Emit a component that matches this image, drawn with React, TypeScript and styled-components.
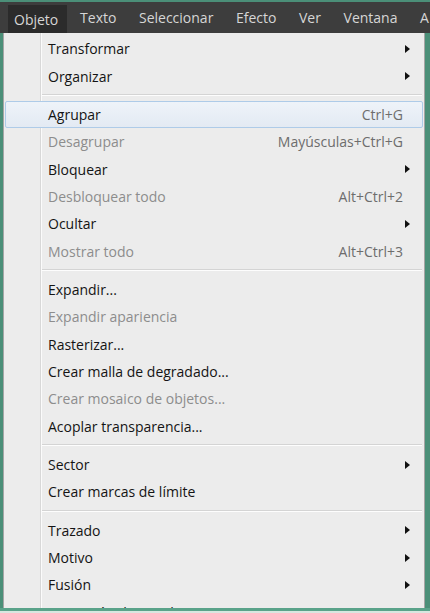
import React from "react";
import styled, { createGlobalStyle } from "styled-components";

const Global = createGlobalStyle`
  html, body { margin: 0; padding: 0; background: #4b8f78; }
  body { font-family: "Open Sans", "Noto Sans", sans-serif; }
`;

const Screen = styled.div`
  width: 430px;
  height: 613px;
  overflow: hidden;
  display: flex;
  flex-direction: column;
  background: #4b8f78;
`;

const Viewport = styled.div`
  height: 606px;
  margin-top: 2px;
  overflow: hidden;
  display: flex;
  flex-direction: column;
`;

const BottomEdge = styled.div`
  height: 3px;
  background: #5aa38a;
  border-bottom: 2px solid #d9e6e0;
`;

const MenuBar = styled.div`
  height: 31px;
  background: #3d3d3d;
  display: flex;
  align-items: stretch;
  padding-left: 8px;
  flex-shrink: 0;
  overflow: hidden;
  white-space: nowrap;
`;

const BarItem = styled.div<{ $active?: boolean }>`
  display: flex;
  align-items: center;
  padding: ${(p) => (p.$active ? "0 9px 0 6px" : "0 11.3px")};
  margin: ${(p) => (p.$active ? "3px 1.5px 0 0" : "0")};
  background: ${(p) => (p.$active ? "#2b2b2b" : "transparent")};
  color: #d6d6d6;
  font-size: 14px;
`;

const Dropdown = styled.div`
  margin: 0 5px 0 3px;
  background: #ececec;
  border: 1px solid #a5a5a5;
  border-top: none;
  flex: 1;
  position: relative;
  padding-top: 2px;
  display: flex;
  flex-direction: column;
`;

const Gutter = styled.div`
  position: absolute;
  left: 36px;
  top: 0;
  bottom: 0;
  width: 1px;
  background: #d8d8d8;
  border-right: 1px solid #fbfbfb;
`;

const Item = styled.div<{ $disabled?: boolean; $hover?: boolean }>`
  height: 27.4px;
  flex-shrink: 0;
  box-sizing: border-box;
  display: flex;
  align-items: center;
  padding-left: 42px;
  padding-right: 12px;
  margin: 0 1px;
  position: relative;
  font-size: 14px;
  white-space: nowrap;
  color: ${(p) => (p.$disabled ? "#8d8d8d" : "#141414")};
  border: 1px solid ${(p) => (p.$hover ? "#aecbe8" : "transparent")};
  border-radius: 2px;
  background: ${(p) =>
    p.$hover ? "linear-gradient(#eef3f9, #e3eaf3)" : "transparent"};
`;

const Label = styled.span`
  flex: 1;
`;

const Shortcut = styled.span`
  color: #6d6d6d;
  margin-right: 7px;
`;

const Arrow = styled.span`
  width: 0;
  height: 0;
  border-top: 4px solid transparent;
  border-bottom: 4px solid transparent;
  border-left: 5px solid #111;
`;

const Separator = styled.div`
  height: 10.8px;
  flex-shrink: 0;
  display: flex;
  align-items: center;
  padding-left: 38px;
  &::after {
    content: "";
    flex: 1;
    height: 1px;
    background: #d4d4d4;
    border-bottom: 1px solid #fdfdfd;
    margin-right: 2px;
  }
`;

type Entry =
  | { sep: true }
  | { label: string; shortcut?: string; sub?: boolean; disabled?: boolean; hover?: boolean };

const entries: Entry[] = [
  { label: "Transformar", sub: true },
  { label: "Organizar", sub: true },
  { sep: true },
  { label: "Agrupar", shortcut: "Ctrl+G", hover: true },
  { label: "Desagrupar", shortcut: "Mayúsculas+Ctrl+G", disabled: true },
  { label: "Bloquear", sub: true },
  { label: "Desbloquear todo", shortcut: "Alt+Ctrl+2", disabled: true },
  { label: "Ocultar", sub: true },
  { label: "Mostrar todo", shortcut: "Alt+Ctrl+3", disabled: true },
  { sep: true },
  { label: "Expandir..." },
  { label: "Expandir apariencia", disabled: true },
  { label: "Rasterizar..." },
  { label: "Crear malla de degradado..." },
  { label: "Crear mosaico de objetos...", disabled: true },
  { label: "Acoplar transparencia..." },
  { sep: true },
  { label: "Sector", sub: true },
  { label: "Crear marcas de límite" },
  { sep: true },
  { label: "Trazado", sub: true },
  { label: "Motivo", sub: true },
  { label: "Fusión", sub: true },
  { label: "Distorsión de envolvente", sub: true },
];

const barItems = ["Objeto", "Texto", "Seleccionar", "Efecto", "Ver", "Ventana", "A"];

export default function App() {
  return (
    <>
      <Global />
      <Screen>
        <Viewport>
          <MenuBar>
            {barItems.map((b, i) => (
              <BarItem key={b} $active={i === 0}>
                {b}
              </BarItem>
            ))}
          </MenuBar>
          <Dropdown>
            <Gutter />
            {entries.map((e, i) =>
              "sep" in e ? (
                <Separator key={i} />
              ) : (
                <Item key={i} $disabled={e.disabled} $hover={e.hover}>
                  <Label>{e.label}</Label>
                  {e.shortcut && <Shortcut>{e.shortcut}</Shortcut>}
                  {e.sub && <Arrow />}
                </Item>
              )
            )}
          </Dropdown>
        </Viewport>
        <BottomEdge />
      </Screen>
    </>
  );
}
